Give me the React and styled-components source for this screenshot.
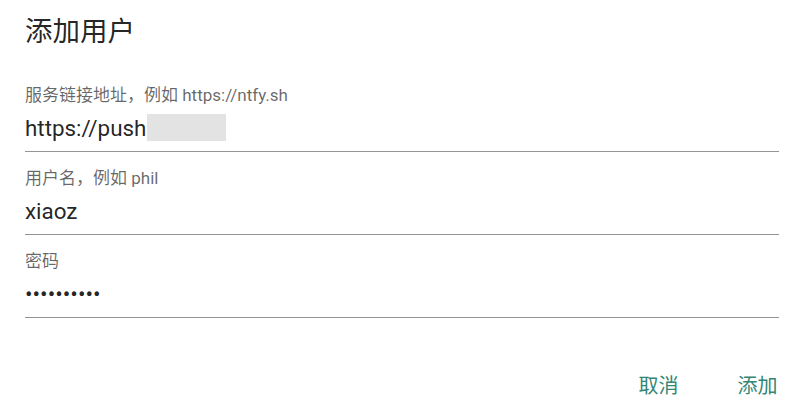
import React from 'react';
import styled, { createGlobalStyle } from 'styled-components';

const GlobalStyle = createGlobalStyle`
  html, body {
    margin: 0;
    padding: 0;
    background: #fff;
  }
  body {
    font-family: Roboto, 'Noto Sans CJK SC', sans-serif;
  }
`;

const Dialog = styled.div`
  width: 800px;
  height: 413px;
  box-sizing: border-box;
  display: flex;
  flex-direction: column;
  background: #fff;
  overflow: hidden;
`;

const Title = styled.h2`
  margin: 0;
  padding: 15px 25px 0;
  font-size: 27.5px;
  font-weight: 400;
  line-height: 34px;
  color: rgba(0, 0, 0, 0.87);
`;

const Content = styled.div`
  display: flex;
  flex-direction: column;
  padding: 36px 21px 0 25px;
  gap: 16px;
`;

const Field = styled.div`
  display: flex;
  flex-direction: column;
  border-bottom: 1px solid rgba(0, 0, 0, 0.42);
`;

const Label = styled.label`
  font-size: 17px;
  line-height: 21px;
  color: rgba(0, 0, 0, 0.6);
`;

const Value = styled.div`
  display: flex;
  align-items: center;
  height: 45px;
  padding-bottom: 2px;
  box-sizing: border-box;
  font-size: 22.4px;
  color: rgba(0, 0, 0, 0.87);
`;

const Redacted = styled.span`
  display: inline-block;
  width: 79px;
  height: 27px;
  margin-left: 1px;
  background: #e3e3e3;
`;

const Actions = styled.div`
  display: flex;
  justify-content: flex-end;
  gap: 20px;
  margin-top: auto;
  padding: 0 3px 9px 0;
`;

const Button = styled.button`
  border: 0;
  background: transparent;
  padding: 6px 10px;
  min-width: 79px;
  font-family: inherit;
  font-size: 20px;
  line-height: 24px;
  color: #338574;
  cursor: pointer;
`;

const fields = [
  { label: '服务链接地址，例如 https://ntfy.sh', value: 'https://push', redacted: true },
  { label: '用户名，例如 phil', value: 'xiaoz' },
  { label: '密码', value: '••••••••••' },
];

const App = () => (
  <Dialog>
    <GlobalStyle />
    <Title>添加用户</Title>
    <Content>
      {fields.map(f => (
        <Field key={f.label}>
          <Label>{f.label}</Label>
          <Value>
            {f.value}
            {f.redacted && <Redacted />}
          </Value>
        </Field>
      ))}
    </Content>
    <Actions>
      <Button>取消</Button>
      <Button>添加</Button>
    </Actions>
  </Dialog>
);

export default App;
